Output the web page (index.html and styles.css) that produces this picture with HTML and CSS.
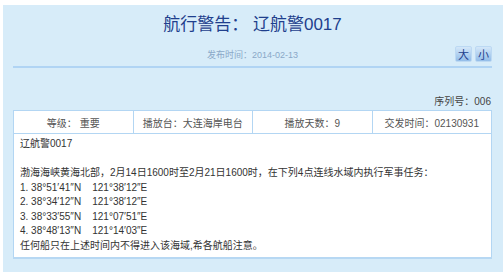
FILE: index.html
```html
<!DOCTYPE html>
<html lang="zh-CN">
<head>
  <meta charset="UTF-8">
  <title>航行警告</title>
  <link rel="stylesheet" href="styles.css">
</head>
<body>
  <div class="page">
    <h1 class="title">航行警告： 辽航警0017</h1>
    <div class="meta">
      <span></span>
      <span class="date">发布时间：2014-02-13</span>
      <div class="size-btns">
        <button>大</button>
        <button>小</button>
      </div>
    </div>
    <div class="serial">序列号：006</div>
    <table class="notice">
      <tr class="info">
        <td>等级： 重要</td>
        <td>播放台：大连海岸电台</td>
        <td>播放天数：9</td>
        <td>交发时间：02130931</td>
      </tr>
      <tr>
        <td colspan="4" class="content">
          辽航警0017<br><br>
          渤海海峡黄海北部，2月14日1600时至2月21日1600时，在下列4点连线水域内执行军事任务：<br>
          1. 38°51′41″N&nbsp;&nbsp;&nbsp;&nbsp;121°38′12″E<br>
          2. 38°34′12″N&nbsp;&nbsp;&nbsp;&nbsp;121°38′12″E<br>
          3. 38°33′55″N&nbsp;&nbsp;&nbsp;&nbsp;121°07′51″E<br>
          4. 38°48′13″N&nbsp;&nbsp;&nbsp;&nbsp;121°14′03″E<br>
          任何船只在上述时间内不得进入该海域,希各航船注意。
        </td>
      </tr>
    </table>
  </div>
</body>
</html>
```

FILE: styles.css
```css
body {
  margin: 0;
  padding: 0;
  background: #fff;
  font-family: "Liberation Sans", Arial, "Noto Sans CJK SC", sans-serif;
  font-size: 10px;
  color: #333;
}

.page {
  margin: 5px 0 0 3px;
  padding: 0 11px 0 10px;
  background-color: #d7ecf9;
  height: 267px;
  box-sizing: border-box;
}

.title {
  margin: 0;
  padding-top: 8px;
  text-align: center;
  font-size: 17px;
  line-height: 24px;
  font-weight: normal;
  color: #1f3f8d;
}

.meta {
  display: grid;
  grid-template-columns: 1fr auto 1fr;
  align-items: center;
  height: 16px;
  padding: 9px 0 4px;
  border-bottom: 2px solid #b0d4f4;
}

.date {
  font-size: 9px;
  color: #8aa8c8;
}

.size-btns {
  display: flex;
  justify-content: flex-end;
  gap: 3px;
}

.size-btns button {
  width: 17px;
  height: 16px;
  padding: 0;
  border: 1px solid #bcd9f3;
  border-radius: 2px;
  background: linear-gradient(#d3e7f9, #93bde9);
  color: #1f3f8d;
  font-size: 11px;
  line-height: 14px;
  font-family: "Noto Sans CJK SC", sans-serif;
}

.serial {
  text-align: right;
  margin-top: 27px;
  padding-right: 1px;
  line-height: 14px;
  color: #444;
}

.notice {
  width: 100%;
  margin-top: 1px;
  border-collapse: collapse;
  background: #fff;
  table-layout: fixed;
  border: 1px solid #a8cfef;
  border-bottom: 2px solid #b7d8f3;
}

.notice td {
  border: 1px solid #b3d6f3;
  padding: 0;
}

.info td {
  height: 22px;
  text-align: center;
  color: #555;
}

.notice .content {
  padding: 3px 6px 4px 6px;
  line-height: 14.5px;
  text-align: left;
  color: #333;
}
```
